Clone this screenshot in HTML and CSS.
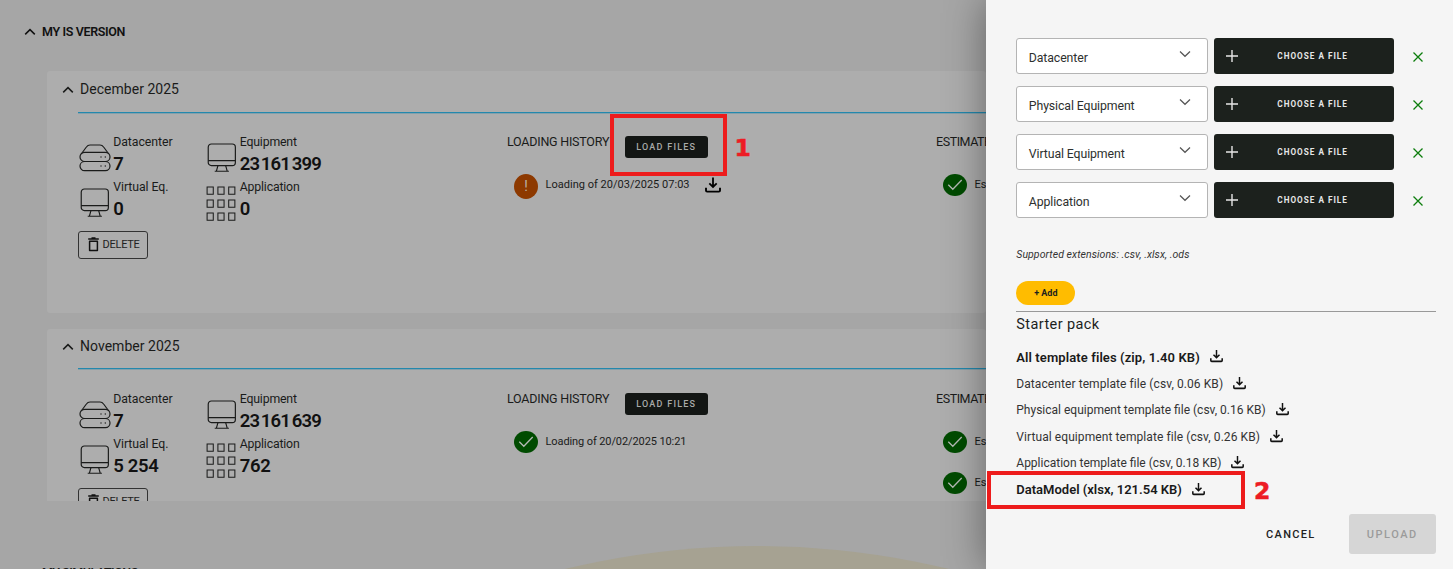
FILE: index.html
```html
<!DOCTYPE html>
<html lang="en">
<head>
<meta charset="utf-8">
<title>My IS version</title>
<link rel="stylesheet" href="styles.css">
</head>
<body>
<svg class="defs" aria-hidden="true">
  <symbol id="i-up" viewBox="0 0 12 8"><path d="M1.2 6.4 6 1.6l4.8 4.8" fill="none" stroke="currentColor" stroke-width="1.5"/></symbol>
  <symbol id="i-down" viewBox="0 0 12 8"><path d="M1 1.5 6 6.3l5-4.8" fill="none" stroke="currentColor" stroke-width="1.2"/></symbol>
  <symbol id="i-server" viewBox="0 0 32 28"><g fill="none" stroke="currentColor" stroke-width="1.2"><path d="M2.200 10 7.400 3Q8.800 1 11 1h10Q23.200 1 24.600 3l5.200 7"/><rect x="1" y="8.300" width="30" height="9.200" rx="4.600"/><rect x="1" y="17.500" width="30" height="9.200" rx="4.600"/></g><g fill="currentColor"><circle cx="22" cy="13" r=".7"/><circle cx="26.300" cy="13" r=".7"/><circle cx="22" cy="22" r=".7"/><circle cx="26.300" cy="22" r=".7"/></g></symbol>
  <symbol id="i-monitor" viewBox="0 0 30 30"><g fill="none" stroke="currentColor" stroke-width="1.2"><rect x="1" y="1" width="27.600" height="22" rx="3.200"/><path d="M1 18h27.600M10.800 23.200 9.300 28.600M18.800 23.200l1.500 5.400M7.600 28.700h14.400"/></g></symbol>
  <symbol id="i-grid" viewBox="0 0 30 35"><g fill="none" stroke="currentColor" stroke-width="1"><path d="M1 1h6v7H1zM11.500 1h6v7h-6zM22 1h6v7h-6zM1 13.600h6v7H1zM11.500 13.600h6v7h-6zM22 13.600h6v7h-6zM1 26.200h6v7H1zM11.500 26.200h6v7h-6zM22 26.200h6v7h-6z"/></g></symbol>
  <symbol id="i-trash" viewBox="0 0 11 15"><path d="M.2 1.900h10.600M3.500.9h4" fill="none" stroke="currentColor" stroke-width="1.500"/><path d="M1.600 4.300h7.800v9.200H1.600z" fill="none" stroke="currentColor" stroke-width="1.500" stroke-linejoin="round"/></symbol>
  <symbol id="i-download" viewBox="0 0 16 16"><path d="M8 .6v9M4.300 6.400 8 10l3.700-3.600" fill="none" stroke="currentColor" stroke-width="1.800"/><path d="M1 10.700v2.800q0 1.100 1.100 1.100h11.800q1.100 0 1.100-1.100v-2.800" fill="none" stroke="currentColor" stroke-width="1.900"/></symbol>
  <symbol id="i-check" viewBox="0 0 24 22"><ellipse cx="12" cy="11" rx="12" ry="11" fill="#004b00"/><path d="M5.300 10.800 9.800 15.300 18.700 6" fill="none" stroke="#b4b8b4" stroke-width="1.300"/></symbol>
  <symbol id="i-plus" viewBox="0 0 12 12"><path d="M6 0v12M0 6h12" stroke="currentColor" stroke-width="1.400"/></symbol>
  <symbol id="i-cross" viewBox="0 0 10 10"><path d="m.5.5 9 9M9.500.5l-9 9" stroke="currentColor" stroke-width="1.300"/></symbol>
</svg>

<div class="app">
  <main class="page">
    <div class="glow"></div>
    <h1 class="section-title"><svg class="chev"><use href="#i-up"/></svg><span>MY IS VERSION</span></h1>

    <div class="versions">
      <section class="card">
        <h2 class="card-title"><svg class="chev"><use href="#i-up"/></svg><span>December 2025</span></h2>
        <div class="card-body">
          <div class="stats">
            <div class="stat"><svg class="ic server"><use href="#i-server"/></svg><div class="stat-text"><span class="label">Datacenter</span><b class="value">7</b></div></div>
            <div class="stat"><svg class="ic monitor"><use href="#i-monitor"/></svg><div class="stat-text"><span class="label eq">Equipment</span><b class="value dense">23 161 399</b></div></div>
            <div class="stat"><svg class="ic monitor"><use href="#i-monitor"/></svg><div class="stat-text"><span class="label">Virtual Eq.</span><b class="value">0</b></div></div>
            <div class="stat"><svg class="ic grid"><use href="#i-grid"/></svg><div class="stat-text"><span class="label eq">Application</span><b class="value">0</b></div></div>
            <button class="delete"><svg><use href="#i-trash"/></svg><span>DELETE</span></button>
          </div>
          <div class="history">
            <div class="history-head"><span class="head">LOADING HISTORY</span><button class="load">LOAD FILES</button></div>
            <div class="event"><span class="warn">!</span><span class="event-text">Loading of 20/03/2025 07:03</span><svg class="dl"><use href="#i-download"/></svg></div>
          </div>
          <div class="estimates">
            <div class="history-head"><span class="head">ESTIMATE</span></div>
            <div class="event"><svg class="ok"><use href="#i-check"/></svg><span class="event-text">Es</span></div>
          </div>
        </div>
      </section>

      <section class="card">
        <h2 class="card-title nov"><svg class="chev"><use href="#i-up"/></svg><span>November 2025</span></h2>
        <div class="card-body nov-body">
          <div class="stats">
            <div class="stat"><svg class="ic server"><use href="#i-server"/></svg><div class="stat-text"><span class="label">Datacenter</span><b class="value">7</b></div></div>
            <div class="stat"><svg class="ic monitor"><use href="#i-monitor"/></svg><div class="stat-text"><span class="label eq">Equipment</span><b class="value dense">23 161 639</b></div></div>
            <div class="stat"><svg class="ic monitor"><use href="#i-monitor"/></svg><div class="stat-text"><span class="label">Virtual Eq.</span><b class="value">5 254</b></div></div>
            <div class="stat"><svg class="ic grid"><use href="#i-grid"/></svg><div class="stat-text"><span class="label eq">Application</span><b class="value">762</b></div></div>
            <button class="delete"><svg><use href="#i-trash"/></svg><span>DELETE</span></button>
          </div>
          <div class="history">
            <div class="history-head"><span class="head">LOADING HISTORY</span><button class="load">LOAD FILES</button></div>
            <div class="event"><svg class="ok"><use href="#i-check"/></svg><span class="event-text short">Loading of 20/02/2025 10:21</span></div>
          </div>
          <div class="estimates">
            <div class="history-head"><span class="head">ESTIMATE</span></div>
            <div class="event"><svg class="ok"><use href="#i-check"/></svg><span class="event-text">Es</span></div>
            <div class="event"><svg class="ok"><use href="#i-check"/></svg><span class="event-text">Es</span></div>
          </div>
        </div>
      </section>
    </div>
    <h1 class="simulations">MY SIMULATIONS</h1>
  </main>

  <aside class="drawer">
    <div class="file-row"><div class="select"><span>Datacenter</span><svg><use href="#i-down"/></svg></div><button class="choose"><svg><use href="#i-plus"/></svg><span>CHOOSE A FILE</span></button><svg class="remove"><use href="#i-cross"/></svg></div>
    <div class="file-row"><div class="select"><span>Physical Equipment</span><svg><use href="#i-down"/></svg></div><button class="choose"><svg><use href="#i-plus"/></svg><span>CHOOSE A FILE</span></button><svg class="remove"><use href="#i-cross"/></svg></div>
    <div class="file-row"><div class="select"><span>Virtual Equipment</span><svg><use href="#i-down"/></svg></div><button class="choose"><svg><use href="#i-plus"/></svg><span>CHOOSE A FILE</span></button><svg class="remove"><use href="#i-cross"/></svg></div>
    <div class="file-row"><div class="select"><span>Application</span><svg><use href="#i-down"/></svg></div><button class="choose"><svg><use href="#i-plus"/></svg><span>CHOOSE A FILE</span></button><svg class="remove"><use href="#i-cross"/></svg></div>
    <p class="hint">Supported extensions: .csv, .xlsx, .ods</p>
    <button class="add">+ Add</button>
    <h2 class="pack-title">Starter pack</h2>
    <ul class="pack">
      <li class="strong all"><span>All template files (zip, 1.40 KB)</span><svg><use href="#i-download"/></svg></li>
      <li><span class="wide">Datacenter template file (csv, 0.06 KB)</span><svg><use href="#i-download"/></svg></li>
      <li><span>Physical equipment template file (csv, 0.16 KB)</span><svg><use href="#i-download"/></svg></li>
      <li><span class="wide">Virtual equipment template file (csv, 0.26 KB)</span><svg><use href="#i-download"/></svg></li>
      <li><span>Application template file (csv, 0.18 KB)</span><svg><use href="#i-download"/></svg></li>
      <li class="strong"><span>DataModel (xlsx, 121.54 KB)</span><svg><use href="#i-download"/></svg></li>
    </ul>
    <div class="actions"><button class="cancel">CANCEL</button><button class="upload">UPLOAD</button></div>
  </aside>

  <div class="mark mark-1"></div><span class="num num-1">1</span>
  <div class="mark mark-2"></div><span class="num num-2">2</span>
</div>
</body>
</html>
```
FILE: styles.css
```css
* { box-sizing: border-box; margin: 0; padding: 0; }
body { font-family: Roboto, "Liberation Sans", sans-serif; color: #1c1f1d; background: #a6a6a6; }
button { font-family: inherit; border: 0; background: none; }
ul { list-style: none; }
svg { display: block; flex: none; }
.defs { position: absolute; width: 0; height: 0; }
.app { position: relative; display: flex; width: 1453px; height: 569px; overflow: hidden; }

/* Dimmed page behind the drawer */
.page { position: relative; width: 986px; height: 569px; overflow: hidden; white-space: nowrap; color: #1a1b1a; }
.glow { position: absolute; left: -58px; top: 546px; width: 1630px; height: 1630px; border-radius: 50%; background: #a6a292; }
.section-title { display: flex; align-items: center; gap: 7px; height: 71px; padding: 0 0 8.500px 24px; font-size: 12.500px; font-weight: 600; letter-spacing: -.36px; color: #111; }
.chev { width: 12px; height: 8px; margin: 2px -1px 0 0; }
.versions { position: relative; display: flex; flex-direction: column; gap: 15.500px; height: 430px; margin-left: 47px; overflow: hidden; }
.card { flex: none; height: 242px; background: #adadad; border-radius: 3px; }
.card-title { display: flex; align-items: center; gap: 7px; height: 41px; padding: 0 0 5px 15px; font-size: 14px; font-weight: 400; letter-spacing: .03px; }
.nov { height: 39.500px; }
.card-body { display: grid; grid-template-columns: 429.500px 429px 1fr; margin-left: 30.500px; padding-top: 20px; border-top: 1px solid #2388ad; box-shadow: inset 0 1px 0 #83a0ab; }
.nov-body { padding-top: 21px; }
.stats { display: grid; grid-template-columns: 126.500px 160px; grid-auto-rows: 44.800px; align-content: start; }
.stat { display: flex; gap: 1px; padding-left: 1.500px; }
.ic { width: 32px; height: 34px; margin-top: 10px; }
.server { height: 28px; margin-top: 11px; }
.monitor { height: 29.500px; margin-top: 10px; }
.grid { width: 31px; height: 36px; margin-top: 8px; margin-right: 1px; }
.stat-text { display: flex; flex-direction: column; padding-left: 1.200px; }
.label { height: 19px; font-size: 12.300px; line-height: 19px; letter-spacing: -.06px; }
.eq { letter-spacing: -.17px; }
.value { height: 24px; font-size: 18.500px; font-weight: 600; line-height: 25px; letter-spacing: -.3px; color: #111; }
.dense { letter-spacing: -.85px; word-spacing: -2px; }
.delete { display: flex; align-items: center; gap: 4px; width: 70px; height: 28px; margin-top: 8px; padding: 0 0 1px 9px; border: 1px solid #333; border-radius: 3px; font-size: 11px; letter-spacing: -.25px; color: #222; }
.delete svg { width: 11px; height: 15px; color: #111; }
.history-head { display: flex; height: 32px; }
.head { width: 117.500px; font-size: 12.500px; line-height: 18px; letter-spacing: -.23px; }
.estimates .head { width: auto; letter-spacing: -.45px; }
.load { width: 83.500px; height: 22px; margin-top: 2.500px; border-radius: 3px; background: #131614; color: #a9aaa9; font-size: 9px; font-weight: 500; letter-spacing: 1.250px; }
.event { display: flex; align-items: center; height: 40.700px; padding: 0 0 0 7px; }
.history-head + .event { margin-top: -.5px; }
.ok { width: 24px; height: 22px; }
.warn { width: 24px; height: 25px; margin-top: 3px; border-radius: 50%; background: #8d3900; color: #bdb3aa; font-size: 14px; line-height: 24px; text-align: center; }
.event-text { margin: 0 15px 1px 7.500px; font-size: 11px; letter-spacing: .02px; }
.short { letter-spacing: -.1px; }
.dl { width: 16px; height: 16px; color: #000; }
.simulations { padding: 64px 0 0 42px; font-size: 12.500px; font-weight: 600; line-height: 16px; letter-spacing: -.5px; position: relative; }

/* Upload drawer */
.drawer { position: relative; width: 467px; height: 569px; padding: 38.300px 17px 0 30.300px; background: #f5f5f5; box-shadow: 0 0 38px rgba(0, 0, 0, .42); }
.file-row { display: flex; align-items: center; height: 36px; margin-bottom: 12px; }
.select { display: flex; justify-content: space-between; width: 191.500px; height: 36px; padding: 0 16px 0 11.500px; border: 1px solid #b4b4b4; border-radius: 3px; background: #fff; font-size: 12.300px; line-height: 38px; letter-spacing: -.1px; color: #2d302e; }
.select svg { width: 12px; height: 8px; margin-top: 11px; color: #555; }
.choose { display: flex; align-items: center; width: 180px; height: 36px; margin-left: 6px; padding-left: 12px; border-radius: 3px; background: #1c211d; color: #e6e6e6; font-size: 8.200px; font-weight: 700; letter-spacing: 1px; }
.choose svg { width: 12px; height: 12px; margin-right: 39.500px; }
.remove { width: 10px; height: 10px; margin: 2px 0 0 19px; color: #0c7d0c; }
.hint { margin-top: 30px; font-size: 10.500px; font-style: italic; line-height: 14px; letter-spacing: .06px; color: #333; }
.add { display: block; width: 59px; height: 23.500px; margin-top: 19px; border-radius: 12px; background: #ffbc00; color: #1c1f1d; font-size: 9px; font-weight: 700; }
.pack-title { margin-top: 6.500px; padding-top: 3.500px; border-top: 1px solid #999; font-size: 14.500px; font-weight: 400; line-height: 18px; letter-spacing: .4px; }
.pack { margin-top: 10px; }
.pack li { display: flex; align-items: center; height: 26.500px; font-size: 12px; color: #333; }
.pack .strong { font-size: 13px; font-weight: 600; color: #1a1a1a; }
.pack .all { letter-spacing: .1px; }
.pack .wide { letter-spacing: .08px; }
.pack svg { width: 13px; height: 14px; margin: 0 0 2px 10px; color: #111; }
.actions { display: flex; justify-content: flex-end; align-items: center; margin-top: 11px; }
.cancel { margin-right: 33px; font-size: 11px; font-weight: 500; letter-spacing: 1.300px; color: #222; }
.upload { width: 87.500px; height: 40.500px; border-radius: 3px; background: #d6d6d6; color: #9b9b9b; font-size: 11px; font-weight: 500; letter-spacing: 1.500px; }

/* Step annotations */
.mark { position: absolute; border: 4px solid #ed1c1c; }
.mark-1 { left: 609.500px; top: 113.500px; width: 117px; height: 62.500px; }
.mark-2 { left: 987px; top: 471px; width: 258px; height: 38px; }
.num { position: absolute; font: bold 23.500px/24px "DejaVu Sans", sans-serif; color: #ed1c24; -webkit-text-stroke: .6px #ed1c24; }
.num-1 { left: 734.500px; top: 136px; }
.num-2 { left: 1254px; top: 479px; }
```
